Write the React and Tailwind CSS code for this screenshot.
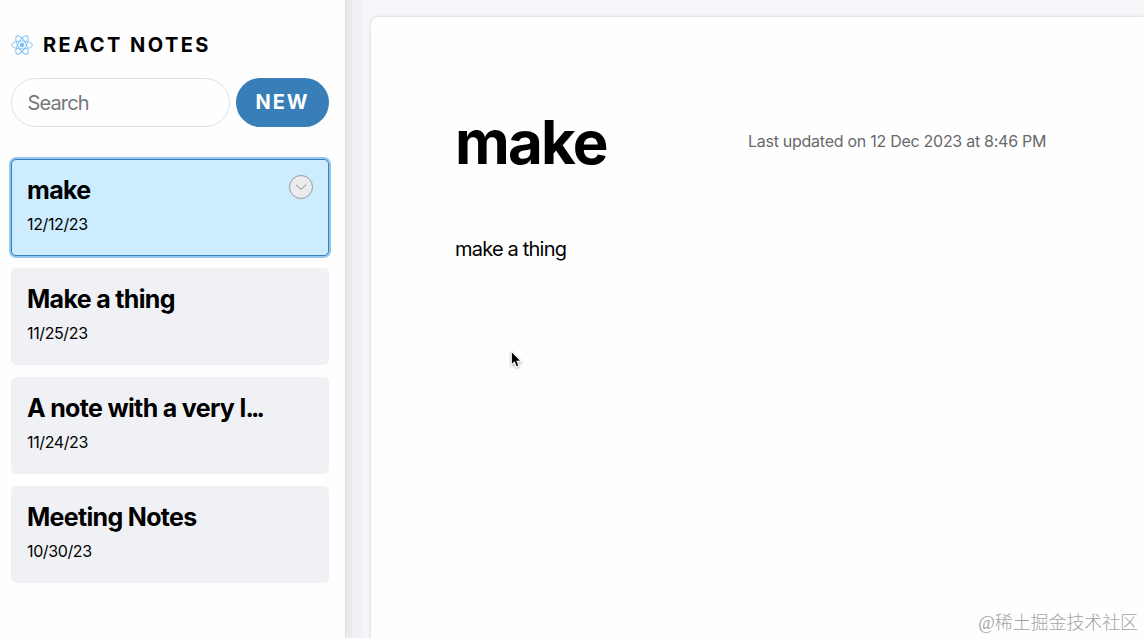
const notes = [
  { title: 'make', date: '12/12/23', active: true },
  { title: 'Make a thing', date: '11/25/23' },
  { title: 'A note with a very l', clipped: true, date: '11/24/23' },
  { title: 'Meeting Notes', date: '10/30/23' },
];

function ReactLogo() {
  return (
    <svg className="h-[22px] w-[22px] shrink-0" viewBox="0 0 22 22" fill="none" stroke="#74bdf5" strokeWidth="0.9">
      <circle cx="11" cy="11" r="2.2" fill="#74bdf5" stroke="none" />
      <ellipse cx="11" cy="11" rx="10.4" ry="4" />
      <ellipse cx="11" cy="11" rx="10.4" ry="4" transform="rotate(60 11 11)" />
      <ellipse cx="11" cy="11" rx="10.4" ry="4" transform="rotate(120 11 11)" />
    </svg>
  );
}

function NoteCard({ note }) {
  return (
    <li
      className={
        note.active
          ? 'flex h-[97px] justify-between rounded-[5px] border border-[#387eb8] bg-[#cdecfd] px-[15px] pt-[14px] shadow-[0_0_0_2px_#94c8f0]'
          : 'flex h-[97px] justify-between rounded-[5px] border border-[#f0f1f5] bg-[#f0f1f5] px-[15px] pt-[14px]'
      }
    >
      <div>
        <h2 className="text-[25px] leading-8 font-bold tracking-[-0.68px] whitespace-nowrap">
          {note.title}
          {note.clipped && <span className="tracking-[-2.9px]">...</span>}
        </h2>
        <p className="mt-[6px] text-[16px] leading-6 tracking-[-0.38px]">{note.date}</p>
      </div>
      {note.active && (
        <span className="mt-px flex h-6 w-6 items-center justify-center rounded-full border border-[#96979c] bg-[#ececee]">
          <svg className="h-[22px] w-[22px] shrink-0" viewBox="0 0 22 22" fill="none" stroke="#85868b" strokeWidth="1">
            <path d="M6 8.7 11 13.4 16 8.7" />
          </svg>
        </span>
      )}
    </li>
  );
}

export default function App() {
  return (
    <div className="relative flex h-[638px] w-[1144px] overflow-hidden bg-[#f5f6f9] font-['Inter','Noto_Sans_CJK_SC',sans-serif] text-black">
      <aside className="w-[345px] shrink-0 bg-[#fefefe] pr-4 pl-[11px]">
        <header className="flex h-[78px] items-center gap-[10px] pt-[11px]">
          <ReactLogo />
          <h1 className="text-[20px] leading-6 font-bold tracking-[2.45px] whitespace-nowrap">REACT NOTES</h1>
        </header>
        <div className="flex h-[49px] gap-[6px]">
          <div className="flex w-[219px] items-center rounded-full border border-[#dfe0e3] px-[15.5px] pt-px text-[20px] tracking-[-0.85px] text-[#76777a]">
            Search
          </div>
          <button className="w-[93px] rounded-full bg-[#387eb8] pb-[2px] text-[20px] font-bold tracking-[2px] text-white">
            NEW
          </button>
        </div>
        <ul className="mt-8 flex flex-col gap-3">
          {notes.map((note) => (
            <NoteCard key={note.title} note={note} />
          ))}
        </ul>
      </aside>
      <div className="w-[26px] shrink-0 bg-[linear-gradient(to_right,#dfe0e2_0_1px,#e9eaed_1px_7px,#f0f1f5_7px_18px,#f5f6f9_18px)]" />
      <main className="mt-[17px] flex-1 rounded-tl-[8px] bg-[#fefefe] pl-[84px] shadow-[0_0_3px_#c9cacd]">
        <div className="flex pt-[90px]">
          <h1 className="w-[293px] text-[60px] leading-[70px] font-bold tracking-[-1.8px]">make</h1>
          <p className="mt-[22px] text-[16px] leading-6 tracking-[-0.27px] whitespace-nowrap text-[#68696c]">
            Last updated on 12 Dec 2023 at 8:46 PM
          </p>
        </div>
        <p className="mt-[56px] text-[20px] leading-8 tracking-[-0.8px]">make a thing</p>
      </main>
      <svg className="absolute top-[349px] left-[509px] h-[22px] w-[16px]" viewBox="0 0 16 22">
        <path
          d="M2.3 2V16.2L5.4 13.3 7.4 18 10 16.8 8.1 12.4H12.4Z"
          fill="#000"
          stroke="#fff"
          strokeWidth="1.1"
          className="drop-shadow-[0_1px_1px_rgba(0,0,0,0.35)]"
        />
      </svg>
      <div className="absolute top-[611px] right-[6px] font-['Liberation_Serif','Noto_Sans_CJK_SC',serif] text-[18px] leading-6 font-light tracking-[-0.1px] whitespace-nowrap text-[#a3a4a7]">
        @稀土掘金技术社区
      </div>
    </div>
  );
}
